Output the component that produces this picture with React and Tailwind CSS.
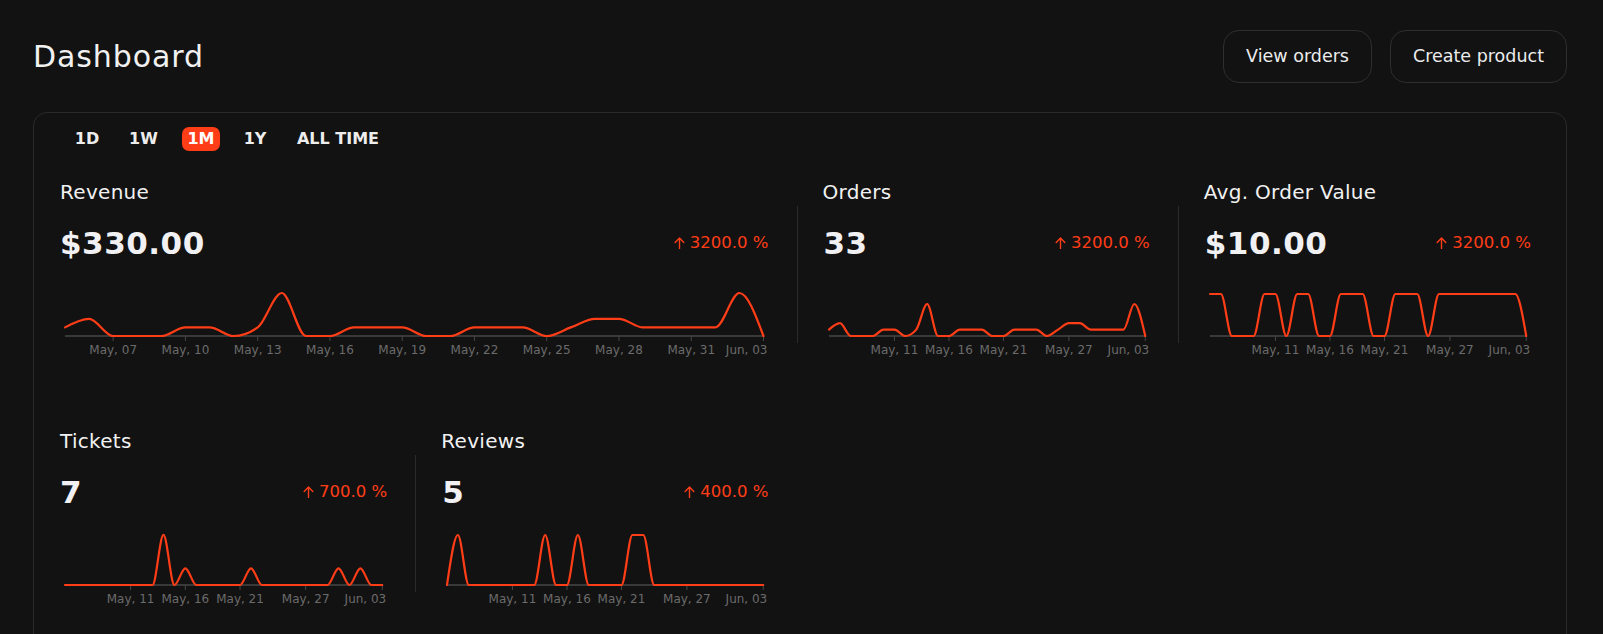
import React, { useLayoutEffect, useRef, useState } from "react";

const ORDERS = [1,2,0,0,0,1,1,0,1,5,0,0,1,1,1,0,0,1,1,1,0,1,2,2,1,1,1,1,5,0];
const REVENUE = ORDERS.map((v) => v * 10);
const AVG = ORDERS.map((v) => (v > 0 ? 10 : 0));
const TICKETS = [0,0,0,0,0,0,0,0,0,3,0,1,0,0,0,0,0,1,0,0,0,0,0,0,0,1,0,1,0,0];
const REVIEWS = [0,1,0,0,0,0,0,0,0,1,0,0,1,0,0,0,0,1,1,0,0,0,0,0,0,0,0,0,0,0];

const WIDE_TICKS = [2,5,8,11,14,17,20,23,26,29];
const NARROW_TICKS = [6,11,16,22,29];

const pad = (n) => (n < 10 ? "0" + n : "" + n);
const dayLabel = (i) => (i < 27 ? `May, ${pad(5 + i)}` : `Jun, ${pad(i - 26)}`);

function monotonePath(pts) {
  const n = pts.length;
  const xs = pts.map((p) => p[0]);
  const ys = pts.map((p) => p[1]);
  const h = [];
  const s = [];
  for (let i = 0; i < n - 1; i++) {
    h[i] = xs[i + 1] - xs[i];
    s[i] = (ys[i + 1] - ys[i]) / h[i];
  }
  const sign = (x) => (x < 0 ? -1 : 1);
  const t = new Array(n).fill(0);
  for (let i = 1; i < n - 1; i++) {
    const h0 = h[i - 1], h1 = h[i], s0 = s[i - 1], s1 = s[i];
    const p = (s0 * h1 + s1 * h0) / (h0 + h1);
    t[i] = (sign(s0) + sign(s1)) * Math.min(Math.abs(s0), Math.abs(s1), 0.5 * Math.abs(p)) || 0;
  }
  t[0] = (3 * s[0] - t[1]) / 2;
  t[n - 1] = (3 * s[n - 2] - t[n - 2]) / 2;
  let d = `M${xs[0]},${ys[0]}`;
  for (let i = 0; i < n - 1; i++) {
    const dx = (xs[i + 1] - xs[i]) / 3;
    d += `C${xs[i] + dx},${ys[i] + dx * t[i]},${xs[i + 1] - dx},${ys[i + 1] - dx * t[i + 1]},${xs[i + 1]},${ys[i + 1]}`;
  }
  return d;
}

function Chart({ data, unit, ticks }) {
  const ref = useRef(null);
  const [w, setW] = useState(0);
  useLayoutEffect(() => {
    const el = ref.current;
    if (!el) return;
    const update = () => setW(el.getBoundingClientRect().width);
    update();
    const ro = new ResizeObserver(update);
    ro.observe(el);
    return () => ro.disconnect();
  }, []);
  const base = 75;
  const n = data.length;
  const pts = data.map((v, i) => [(w * i) / (n - 1), base - v * unit]);
  return (
    <div ref={ref} className="mx-[5px] h-[82px]">
      {w > 0 && (
        <svg width={w} height={82} className="block overflow-visible">
          <line x1={0} y1={base} x2={w} y2={base} stroke="#474747" strokeWidth={1.5} />
          {ticks.map((i) => {
            const x = (w * i) / (n - 1);
            return <line key={"t" + i} x1={x} y1={base} x2={x} y2={base + 5} stroke="#474747" strokeWidth={1} />;
          })}
          <path d={monotonePath(pts)} fill="none" stroke="#ff3d17" strokeWidth={2.2} strokeLinejoin="round" strokeLinecap="round" />
          {ticks.map((i, k) => {
            const x = (w * i) / (n - 1);
            const last = k === ticks.length - 1;
            return (
              <text
                key={"l" + i}
                x={last ? w + 4 : x}
                y={base + 18}
                textAnchor={last ? "end" : "middle"}
                fill="#6b6b6b"
                fontSize="12"
                fontFamily="'DejaVu Sans', sans-serif"
              >
                {dayLabel(i)}
              </text>
            );
          })}
        </svg>
      )}
    </div>
  );
}

function UpArrow() {
  return (
    <svg width="11" height="12" viewBox="0 0 11 12" className="mr-[5px] shrink-0">
      <path d="M5.5 11.5V1.2M1.2 5.4L5.5 1.1L9.8 5.4" fill="none" stroke="#ff3d17" strokeWidth="1.4" strokeLinecap="round" strokeLinejoin="round" />
    </svg>
  );
}

function Metric({ title, value, pct, data, unit, ticks, divider, span }) {
  return (
    <div className={span ? "col-span-2" : ""}>
      <div className="pl-[26px] pr-[28px] h-[24px] text-[20px] leading-[24px] tracking-[0.3px] text-[#f1f1f1]">{title}</div>
      <div className={"mt-[2px] h-[137px] pl-[26px] pr-[28px] pt-[19px] " + (divider ? "border-l border-[#2a2a2a]" : "")}>
        <div className="flex h-[36px] items-center justify-between">
          <div className="text-[31px] leading-[36px] font-bold tracking-[0.5px] text-[#f1f1f4]">{value}</div>
          <div className="flex items-center text-[16.5px] leading-[20px] text-[#ff3d17]">
            <UpArrow />
            <span>{pct}</span>
          </div>
        </div>
        <Chart data={data} unit={unit} ticks={ticks} />
      </div>
    </div>
  );
}

export default function App() {
  const tabs = [
    { l: "1D", w: "w-[36px]" },
    { l: "1W", w: "w-[43px]" },
    { l: "1M", w: "w-[38px]", active: true },
    { l: "1Y", w: "w-[36px]" },
    { l: "ALL TIME", w: "w-[96px]" },
  ];
  return (
    <div
      className="h-[634px] overflow-hidden bg-[#121212] pl-[33px] pr-[36px] text-[#f1f1f1]"
      style={{ fontFamily: "'DejaVu Sans', 'Noto Sans', sans-serif" }}
    >
      <div className="flex h-[83px] items-end justify-between">
        <div className="flex h-[53px] items-center text-[30px] leading-[36px] tracking-[0.9px] text-[#f1f1f1]">Dashboard</div>
        <div className="flex gap-[18px]">
          <button className="flex h-[53px] items-center rounded-[16px] border border-[#2e2e2e] px-[22px] text-[17.5px] text-[#ececec]">
            View orders
          </button>
          <button className="flex h-[53px] items-center rounded-[16px] border border-[#2e2e2e] px-[22px] text-[17.5px] text-[#ececec]">
            Create product
          </button>
        </div>
      </div>
      <div className="mt-[29px] h-[600px] rounded-[14px] border border-[#2a2a2a]">
        <div className="flex gap-[17px] pl-[35px] pt-[14px]">
          {tabs.map((t) => (
            <div
              key={t.l}
              className={
                t.w +
                " flex h-[24px] items-center justify-center rounded-[7px] text-[16px] font-bold leading-[24px] " +
                (t.active ? "bg-[#ff3d17] text-white" : "text-[#ededed]")
              }
            >
              {t.l}
            </div>
          ))}
        </div>
        <div className="mt-[29px] grid grid-cols-4 gap-y-[86px] pr-[7px]">
          <Metric title="Revenue" value="$330.00" pct="3200.0 %" data={REVENUE} unit={0.86} ticks={WIDE_TICKS} span />
          <Metric title="Orders" value="33" pct="3200.0 %" data={ORDERS} unit={6.4} ticks={NARROW_TICKS} divider />
          <Metric title="Avg. Order Value" value="$10.00" pct="3200.0 %" data={AVG} unit={4.2} ticks={NARROW_TICKS} divider />
          <Metric title="Tickets" value="7" pct="700.0 %" data={TICKETS} unit={16.7} ticks={NARROW_TICKS} />
          <Metric title="Reviews" value="5" pct="400.0 %" data={REVIEWS} unit={50} ticks={NARROW_TICKS} divider />
        </div>
      </div>
    </div>
  );
}
